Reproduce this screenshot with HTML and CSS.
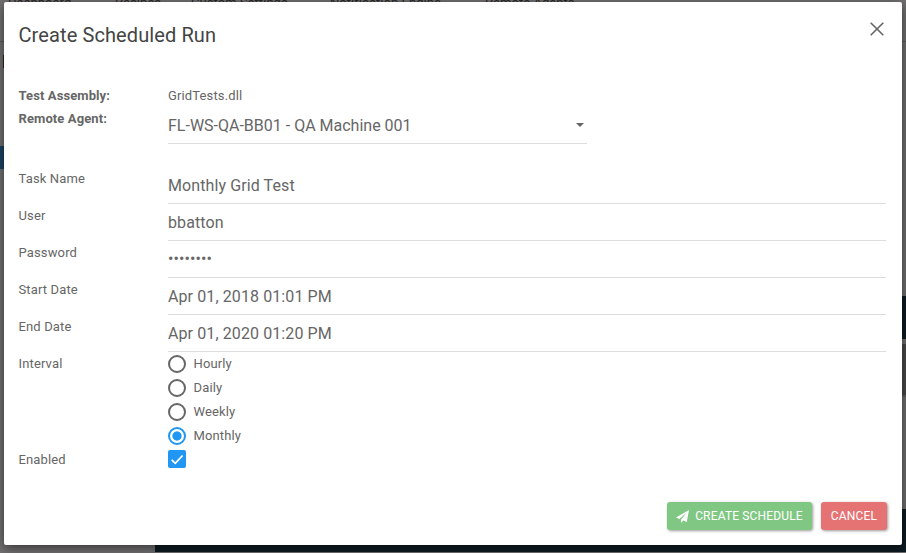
FILE: index.html
```html
<!DOCTYPE html>
<html lang="en">
<head>
<meta charset="utf-8">
<title>Create Scheduled Run</title>
<link rel="stylesheet" href="styles.css">
</head>
<body>
<div class="page">
  <nav class="nav"><span class="nav-dashboard">Dashboard</span><span class="nav-recipes">Recipes</span><span class="nav-custom">Custom Settings</span><span class="nav-notify">Notification Engine</span><span>Remote Agents</span></nav>
  <div class="content">
    <div class="side"><div class="side-mark"></div><div class="side-active"></div></div>
    <div class="main"><div class="bar"></div><div class="panel"></div><div class="bar bar-last"></div></div>
  </div>
</div>
<section class="modal" role="dialog">
  <header class="header">
    <h1>Create Scheduled Run</h1>
    <svg class="close" viewBox="0 0 14 14"><path d="M.7.7 13.3 13.3M13.3.7.7 13.3"/></svg>
  </header>
  <div class="form">
    <div class="row assembly"><b>Test Assembly:</b><span>GridTests.dll</span></div>
    <div class="row agent"><b>Remote Agent:</b><div class="field select"><span>FL-WS-QA-BB01 - QA Machine 001</span><i class="caret"></i></div></div>
    <div class="row text-row"><label>Task Name</label><div class="field">Monthly Grid Test</div></div>
    <div class="row text-row"><label>User</label><div class="field">bbatton</div></div>
    <div class="row text-row"><label>Password</label><div class="field password">••••••••</div></div>
    <div class="row text-row"><label>Start Date</label><div class="field">Apr 01, 2018 01:01 PM</div></div>
    <div class="row text-row"><label>End Date</label><div class="field">Apr 01, 2020 01:20 PM</div></div>
    <div class="row interval"><label>Interval</label>
      <div class="options">
        <div class="option"><i class="radio"></i>Hourly</div>
        <div class="option"><i class="radio"></i>Daily</div>
        <div class="option"><i class="radio"></i>Weekly</div>
        <div class="option"><i class="radio checked"></i>Monthly</div>
      </div>
    </div>
    <div class="row enabled"><label>Enabled</label><svg class="check" viewBox="0 0 18 18"><path d="M3.7 9.8 7.3 13.3 14.6 5.5"/></svg></div>
  </div>
  <footer class="footer">
    <div class="button create"><svg class="plane" viewBox="0 0 13 13"><path d="M13 0 0 7.400 3.300 8.900 10.800 2.500 5.100 9.400V13L7.200 10.500 10.800 12Z"/></svg><span>CREATE SCHEDULE</span></div>
    <div class="button cancel">CANCEL</div>
  </footer>
</section>
</body>
</html>
```
FILE: styles.css
```css
* { box-sizing: border-box; }
body {
  margin: 0;
  height: 553px;
  overflow: hidden;
  position: relative;
  background: #737171;
  color: #666;
  font: 13px/18px Roboto, sans-serif;
  letter-spacing: .14px;
}
.page { height: 553px; display: flex; flex-direction: column; }
.nav {
  height: 42px;
  flex: none;
  display: flex;
  padding-left: 8px;
  border-bottom: 1px solid #5c5a5a;
  color: #292929;
  line-height: 15px;
  letter-spacing: .05px;
}
.nav span { margin-top: -5px; flex: none; }
.nav-dashboard { width: 107px; }
.nav-recipes { width: 76px; }
.nav-custom { width: 139px; }
.nav-notify { width: 155px; }
.content { flex: 1; display: flex; }
.side { width: 155px; }
.side-mark { width: 1px; height: 13px; margin: 13px 0 0 3px; background: #3d2414; }
.side-active { width: 4px; height: 23px; margin-top: 78px; background: #1c4364; }
.main { flex: 1; padding-top: 254px; }
.bar { height: 43px; background: #0d1b23; }
.panel { height: 53px; margin-top: 5px; background: #4b4a4a; border-bottom: 2px solid #626161; }
.bar-last { margin-top: 112px; }
.modal {
  position: absolute;
  left: 4px;
  top: 2px;
  width: 898px;
  height: 543px;
  background: #fff;
  border-radius: 2px;
  box-shadow: 0 3px 12px rgba(0, 0, 0, .55);
  display: flex;
  flex-direction: column;
}
.header {
  height: 85px;
  padding: 20px 18px 0 14.500px;
  display: flex;
  justify-content: space-between;
  color: #444;
}
h1 { margin: 0; font-size: 20px; line-height: 26px; font-weight: 400; letter-spacing: .1px; }
.close { width: 14px; height: 14px; fill: none; stroke: #666; stroke-width: 1.6; }
.form { padding: 0 16px 0 14.500px; }
.row { display: grid; grid-template-columns: 149.500px 1fr; }
.row b, .row label { font-weight: 400; }
.row b { font-weight: 700; letter-spacing: .1px; }
.assembly { height: 20px; }
.agent { height: 60px; }
.agent b { padding-top: 3px; }
.field {
  height: 37px;
  padding-top: 9px;
  font-size: 16px;
  line-height: 20px;
  letter-spacing: .1px;
  border-bottom: 1px solid #ddd;
}
.select {
  width: 419px;
  display: flex;
  justify-content: space-between;
  padding-right: 3px;
  letter-spacing: 0;
}
.password { padding-top: 8px; }
.caret {
  width: 8px;
  height: 4px;
  margin-top: 7px;
  background: #666;
  clip-path: polygon(0 0, 100% 0, 50% 100%);
}
.text-row { height: 37px; }
.text-row label { padding-top: 3px; }
.options { display: flex; flex-direction: column; gap: 6px; padding-top: 3px; }
.option { display: flex; align-items: center; gap: 7.500px; height: 18px; }
.radio { width: 18px; height: 18px; border: 2px solid #666; border-radius: 50%; }
.radio.checked {
  border-color: #2196f3;
  background: radial-gradient(circle, #2196f3 4.200px, transparent 5px);
}
.interval label { padding-top: 3px; }
.enabled { margin-top: 5px; }
.enabled label { padding-top: 1px; }
.check {
  width: 18px;
  height: 18px;
  background: #2196f3;
  border-radius: 2px;
  fill: none;
  stroke: #fff;
  stroke-width: 1.8;
}
.footer { margin-top: auto; display: flex; justify-content: flex-end; gap: 9px; padding: 0 15px 15px 0; }
.button {
  height: 28px;
  display: flex;
  align-items: center;
  justify-content: center;
  gap: 6px;
  color: #fff;
  border-radius: 3px;
  font-size: 12px;
  font-weight: 400;
  letter-spacing: .16px;
  box-shadow: 1px 1px 3px rgba(0, 0, 0, .4);
}
.create { width: 145px; background: #81c784; }
.cancel { width: 66px; background: #e57373; }
.plane { width: 13px; height: 13px; fill: #fff; }
```
